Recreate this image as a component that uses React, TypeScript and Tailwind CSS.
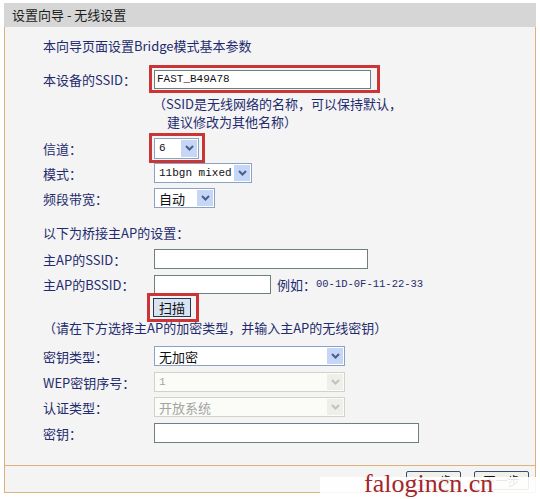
import React from 'react';

const cjk = "font-['Noto_Sans_CJK_SC','Noto_Sans',sans-serif]";
const mono = "font-['Liberation_Mono',monospace]";

function Chevron({ disabled }: { disabled?: boolean }) {
  return (
    <svg width="9" height="6" viewBox="0 0 9 6">
      <path
        d="M1 1 L4.5 4.5 L8 1"
        fill="none"
        stroke={disabled ? '#c2c2bc' : '#4a5e8c'}
        strokeWidth="2"
      />
    </svg>
  );
}

function Select({
  className,
  value,
  disabled,
  isMono,
}: {
  className: string;
  value: string;
  disabled?: boolean;
  isMono?: boolean;
}) {
  return (
    <div
      className={`flex items-center border ${
        disabled ? 'border-[#d3d2c8] bg-[#fbfbf8] text-[#a4a4a4]' : 'border-[#8aa3c2] bg-white text-[#111]'
      } ${className}`}
    >
      <span className={`flex-1 pl-[4px] whitespace-nowrap ${isMono ? `${mono} text-[11px]` : 'text-[13px]'} leading-none`}>
        {value}
      </span>
      <div
        className={`mr-[1px] flex h-[calc(100%-2px)] w-[16px] items-center justify-center ${
          disabled ? 'bg-[#efefe9]' : 'bg-[#c5d6f6]'
        }`}
      >
        <Chevron disabled={disabled} />
      </div>
    </div>
  );
}

function TextInput({ className, value }: { className: string; value?: string }) {
  return (
    <div className={`flex items-center border border-[#6e7f7f] bg-white ${className}`}>
      {value && <span className={`${mono} pl-[2px] text-[11px] leading-none text-[#111]`}>{value}</span>}
    </div>
  );
}

function Label({ children }: { children: React.ReactNode }) {
  return <div className="w-[111px] shrink-0 whitespace-nowrap text-[13px] leading-none">{children}</div>;
}

export default function App() {
  return (
    <div className={`relative h-[499px] w-[540px] overflow-hidden bg-white ${cjk}`}>
      <div className="ml-[4px] mt-[3px] w-[532px]">
        <div className="flex h-[24px] items-center bg-[#d6d6d6] pl-[8px] text-[13px] text-[#1c1c1c]">
          设置向导 - 无线设置
        </div>
        <div className="border-x border-b border-[#dcb27a] bg-[#f4f4f4]">
          <div className="flex h-[438px] flex-col pl-[38px] pt-[9px] text-[#1f2b6e]">
            <div className="h-[20px] text-[13px] leading-[20px]">本向导页面设置Bridge模式基本参数</div>

            <div className="mt-[9px] flex h-[28px] items-center">
              <Label>本设备的SSID：</Label>
              <div className="-ml-[5px] flex h-[28px] w-[231px] items-center border-[3px] border-[#cc3535] pl-[2px]">
                <TextInput className="h-[19px] w-[217px]" value="FAST_B49A78" />
              </div>
            </div>

            <div className="ml-[110px] mt-[2px] text-[13px] leading-[18px]">
              <div>（SSID是无线网络的名称，可以保持默认，</div>
              <div className="pl-[14px]">建议修改为其他名称）</div>
            </div>

            <div className="mt-[2px] flex h-[30px] items-center">
              <Label>信道：</Label>
              <div className="-ml-[5px] flex h-[30px] w-[56px] items-center border-[3px] border-[#cc3535] pl-[2px]">
                <Select className="h-[21px] w-[45px]" value="6" isMono />
              </div>
            </div>

            <div className="flex h-[20px] items-center">
              <Label>模式：</Label>
              <Select className="h-[20px] w-[98px]" value="11bgn mixed" isMono />
            </div>

            <div className="mt-[5px] flex h-[20px] items-center">
              <Label>频段带宽：</Label>
              <Select className="h-[20px] w-[61px]" value="自动" />
            </div>

            <div className="mt-[16px] h-[18px] text-[13px] leading-[18px]">以下为桥接主AP的设置：</div>

            <div className="mt-[7px] flex h-[20px] items-center">
              <Label>主AP的SSID：</Label>
              <TextInput className="h-[20px] w-[214px]" />
            </div>

            <div className="mt-[5px] flex h-[20px] items-center">
              <Label>主AP的BSSID：</Label>
              <TextInput className="h-[19px] w-[117px]" />
              <span className="ml-[6px] text-[13px] leading-none">例如：</span>
              <span className={`${mono} text-[10.5px] leading-none`}>00-1D-0F-11-22-33</span>
            </div>

            <div className="-mt-[1px] flex h-[29px] items-center">
              <div className="w-[111px] shrink-0" />
              <div className="-ml-[7px] flex h-[29px] w-[52px] items-center border-[3px] border-[#cc3535] pl-[3px]">
                <button className="flex h-[19px] w-[38px] items-center justify-center border border-[#2a3650] bg-[#d8e4f2] text-[13px] leading-none text-[#111]">
                  扫描
                </button>
              </div>
            </div>

            <div className="-mt-[3px] h-[18px] text-[13px] leading-[18px]">
              （请在下方选择主AP的加密类型，并输入主AP的无线密钥）
            </div>

            <div className="mt-[9px] flex h-[20px] items-center">
              <Label>密钥类型：</Label>
              <Select className="h-[20px] w-[191px]" value="无加密" />
            </div>

            <div className="mt-[6px] flex h-[20px] items-center">
              <Label>WEP密钥序号：</Label>
              <Select className="h-[20px] w-[191px]" value="1" disabled isMono />
            </div>

            <div className="mt-[5px] flex h-[20px] items-center">
              <Label>认证类型：</Label>
              <Select className="h-[20px] w-[191px]" value="开放系统" disabled />
            </div>

            <div className="mt-[6px] flex h-[20px] items-center">
              <Label>密钥：</Label>
              <TextInput className="h-[20px] w-[265px]" />
            </div>
          </div>

          <div className="flex h-[27px] justify-end gap-[13px] border-t border-[#dcb27a] pr-[6px] pt-[5px]">
            <button className="h-[19px] w-[55px] rounded-[2px] border border-[#3a4c6e] bg-[#f1f1ec] text-[12px] leading-none text-[#111]">
              上一步
            </button>
            <button className="h-[19px] w-[55px] rounded-[2px] border border-[#3a4c6e] bg-[#f1f1ec] text-[12px] leading-none text-[#111]">
              下一步
            </button>
          </div>
        </div>
      </div>

      <div className="absolute left-[320px] top-[477px] h-[22px] w-[216px] bg-white/90" />
      <div className="absolute left-[364px] top-[471px] font-['Liberation_Serif',serif] text-[26px] leading-none text-[#a3262b]">
        falogincn.cn
      </div>
    </div>
  );
}
